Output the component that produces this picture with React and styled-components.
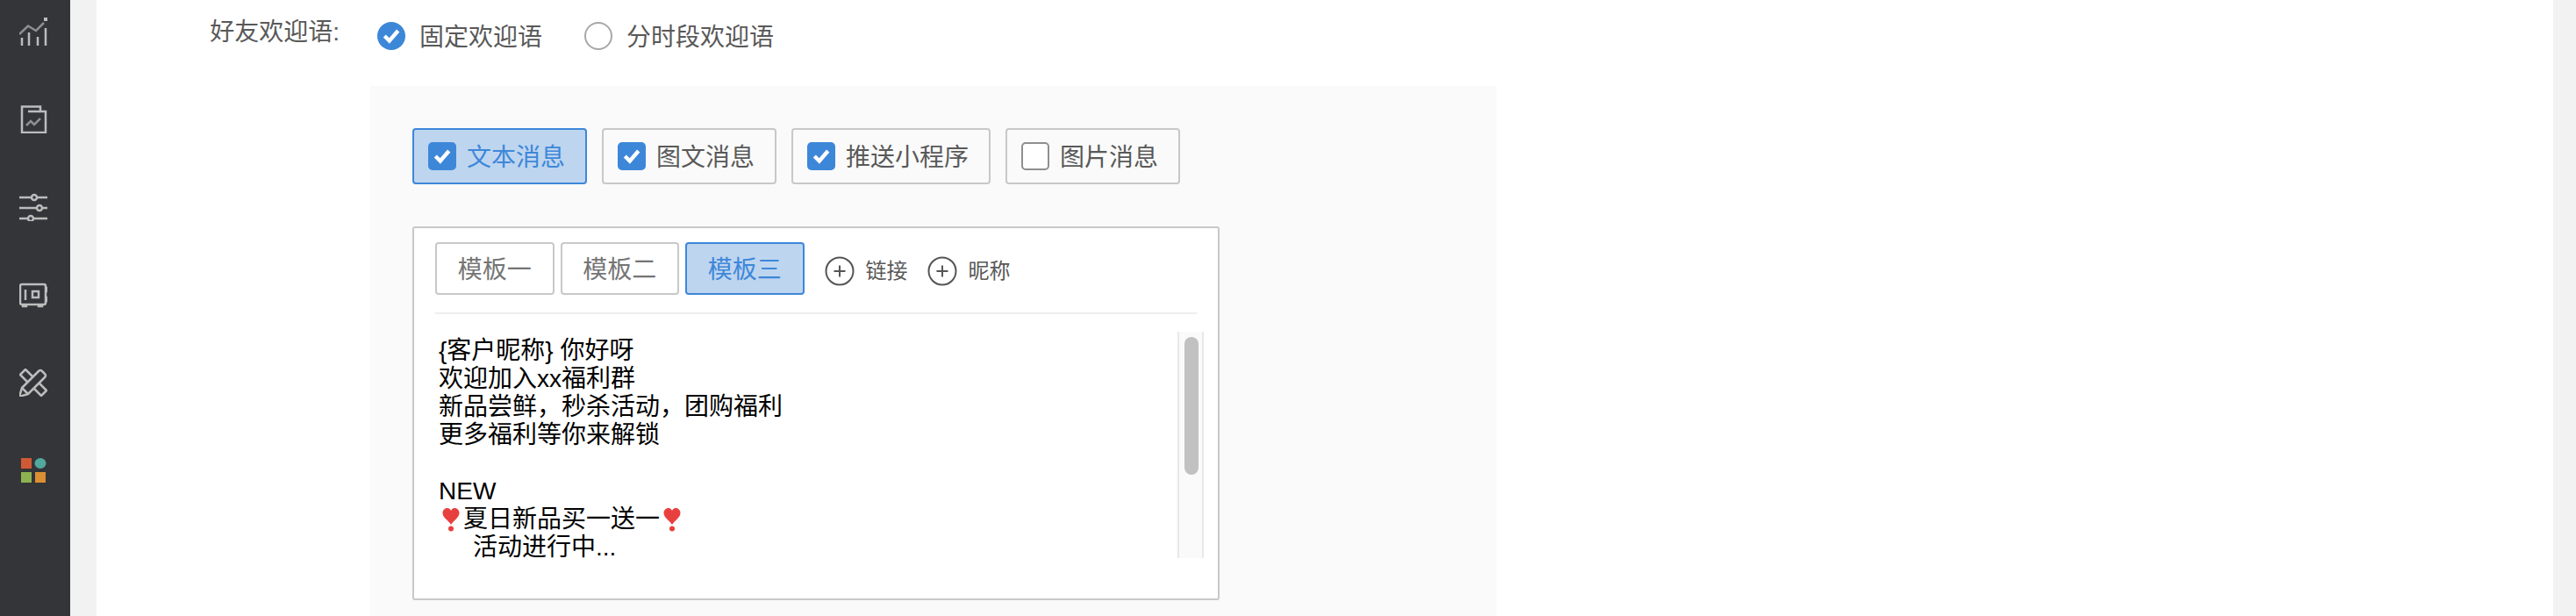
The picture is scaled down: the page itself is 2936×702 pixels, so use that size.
import React from 'react';
import styled, { createGlobalStyle } from 'styled-components';

const Global = createGlobalStyle`
  html, body { margin: 0; padding: 0; height: 100%; overflow: hidden; }
  body {
    background: #f2f2f2;
    font-family: "Liberation Sans", "Noto Sans CJK SC", sans-serif;
  }
`;

const Layout = styled.div`
  display: flex;
  width: 2936px;
  height: 702px;
  overflow: hidden;
`;

const Sidebar = styled.nav`
  width: 80px;
  flex: none;
  background: #333538;
  display: flex;
  flex-direction: column;
  align-items: center;
  padding: 20px 4px 0 0;
  box-sizing: border-box;
`;

const NavIcon = styled.div`
  width: 32px;
  height: 32px;
  margin-bottom: 68px;
  svg { display: block; }
`;

const Main = styled.main`
  flex: 1;
  padding: 0 26px 0 30px;
`;

const Card = styled.section`
  background: #fff;
  height: 702px;
  padding-top: 21px;
  box-sizing: border-box;
`;

const FormRow = styled.div`
  display: flex;
  height: 40px;
`;

const FormLabel = styled.label`
  width: 277px;
  text-align: right;
  font-size: 28px;
  line-height: 31px;
  color: #595959;
`;

const RadioGroup = styled.div`
  display: flex;
  gap: 48px;
  margin-left: 43px;
`;

const Radio = styled.div`
  display: flex;
  align-items: center;
  gap: 16px;
  font-size: 28px;
  color: #595959;
`;

const RadioText = styled.span`
  margin-top: -3px;
`;

const RadioMark = styled.span`
  width: 32px;
  height: 32px;
  border-radius: 50%;
  box-sizing: border-box;
  border: ${p => (p.$on ? 'none' : '2px solid #a8a8a8')};
  background: ${p => (p.$on ? '#3d87d9' : '#fff')};
  display: flex;
  align-items: center;
  justify-content: center;
`;

const Panel = styled.div`
  margin: 37px 0 0 312px;
  width: 1284px;
  height: 604px;
  background: #fafafa;
  padding: 48px;
  box-sizing: border-box;
`;

const TypeRow = styled.div`
  display: flex;
  gap: 17px;
`;

const TypeButton = styled.div`
  height: 64px;
  padding: 0 23px 0 16px;
  box-sizing: border-box;
  border: 2px solid ${p => (p.$active ? '#3d87d9' : '#c8c8c8')};
  border-radius: 4px;
  background: ${p => (p.$active ? '#bed5ef' : 'transparent')};
  color: ${p => (p.$active ? '#3d87d9' : '#595959')};
  display: flex;
  align-items: center;
  gap: 12px;
  font-size: 28px;
`;

const TypeLabel = styled.span`
  margin-top: -2px;
`;

const CheckMark = styled.span`
  width: 32px;
  height: 32px;
  border-radius: 5px;
  box-sizing: border-box;
  background: ${p => (p.$on ? '#3d87d9' : '#fff')};
  border: ${p => (p.$on ? 'none' : '2px solid #8f8f8f')};
  display: flex;
  align-items: center;
  justify-content: center;
`;

const Editor = styled.div`
  margin-top: 48px;
  width: 920px;
  height: 426px;
  background: #fff;
  border: 2px solid #c8c8c8;
  border-radius: 3px;
  box-sizing: border-box;
  padding: 16px 24px 0;
`;

const ToolBar = styled.div`
  display: flex;
  height: 82px;
  box-sizing: border-box;
  border-bottom: 2px solid #eeeeee;
`;

const TemplateButton = styled.div`
  width: 135.5px;
  height: 60px;
  margin-right: 7px;
  padding-bottom: 3px;
  box-sizing: border-box;
  border: 2px solid ${p => (p.$active ? '#3d87d9' : '#c8c8c8')};
  border-radius: 4px;
  background: ${p => (p.$active ? '#bed5ef' : '#fff')};
  color: ${p => (p.$active ? '#3d87d9' : '#757575')};
  display: flex;
  align-items: center;
  justify-content: center;
  font-size: 28px;
`;

const InsertButton = styled.div`
  display: flex;
  align-items: center;
  gap: 13px;
  height: 60px;
  margin-left: ${p => (p.$first ? '16px' : '22px')};
  font-size: 24px;
  color: #595959;
  svg { display: block; margin-top: 6px; }
`;

const MessageBox = styled.div`
  display: flex;
  margin: 20px -8px 0 0;
  height: 258px;
`;

const MessageText = styled.div`
  flex: 1;
  padding: 6px 0 0 4px;
  font-size: 28px;
  line-height: 32px;
  color: #000;
  white-space: pre;
`;

const ScrollTrack = styled.div`
  width: 30px;
  height: 258px;
  background: #fafafa;
  border-left: 2px solid #e8e8e8;
  border-right: 2px solid #e8e8e8;
  box-sizing: border-box;
  padding: 6px 4px 0 6px;
`;

const ScrollThumb = styled.div`
  width: 16px;
  height: 157px;
  background: #c1c1c1;
  border-radius: 8px;
`;

const Tick = () => (
  <svg width="22" height="22" viewBox="0 0 20 20" fill="none">
    <path d="M3 10 L8 15 L17 4.500" stroke="#fff" strokeWidth="4" />
  </svg>
);

const PlusCircle = () => (
  <svg width="34" height="34" viewBox="0 0 34 34" fill="none" stroke="#555" strokeWidth="2">
    <circle cx="17" cy="17" r="15.500" />
    <path d="M17 10.500v13M10.500 17h13" />
  </svg>
);

const HeartSvg = styled.svg`
  vertical-align: -6px;
`;

const HeartMark = () => (
  <HeartSvg width="28" height="28" viewBox="0 0 28 28">
    <path
      d="M14 19 C11 14 4.500 11 4.500 5.500 C4.500 2 7.500 0 10 0 C12 0 13.500 1.500 14 3 C14.500 1.500 16 0 18 0 C20.500 0 23.500 2 23.500 5.500 C23.500 11 17 14 14 19Z"
      fill="#e8403e"
    />
    <circle cx="14" cy="23.500" r="3" fill="#e8403e" />
  </HeartSvg>
);

const stroke = { fill: 'none', stroke: '#bcbcbc', strokeWidth: 2.500 };

const icons = [
  <svg key="chart" width="32" height="32" viewBox="0 0 32 32" {...stroke}>
    <path d="M0 19 L10 9.500 L19 15 L28 6" stroke="#8f8f8f" />
    <path d="M3 32V23M11 32V17M21 32V22M30 32V12" />
    <rect x="28" y="0" width="4" height="4" fill="#bcbcbc" stroke="none" />
  </svg>,
  <svg key="folder" width="32" height="32" viewBox="0 0 32 32" {...stroke}>
    <path d="M3 1.500H24V7H30V31H3Z" />
    <path d="M10 7H24" />
    <path d="M8 23L13 18L17 22L24 15" stroke="#8f8f8f" />
  </svg>,
  <svg key="sliders" width="32" height="32" viewBox="0 0 32 32" {...stroke}>
    <path d="M0 5H14M20 5H32M0 17H20M26 17H32M0 29H10M16 29H32" />
    <circle cx="17" cy="5" r="3" />
    <circle cx="23" cy="17" r="3" />
    <circle cx="13" cy="29" r="3" />
  </svg>,
  <svg key="safe" width="32" height="32" viewBox="0 0 32 32" {...stroke}>
    <rect x="1" y="4" width="29" height="23" rx="2" />
    <path d="M7 10V22M4 27v2h4v-2M22 27v2h4v-2M30 8h2v4h-2M30 19h2v4h-2" />
    <rect x="15" y="12" width="7" height="7" />
  </svg>,
  <svg key="tools" width="32" height="32" viewBox="0 0 32 32" {...stroke} strokeLinejoin="round">
    <path d="M0 32L3 22L22 3Q24 1 26 3L29 6Q31 8 29 10L10 29Z" />
    <path d="M3 22L10 29" />
    <path d="M9.500 15.500L1 7L7 1L15.500 9.500" />
    <path d="M16.500 22.500L25 31L31 25L22.500 16.500" />
  </svg>,
  <svg key="apps" width="32" height="32" viewBox="0 0 32 32">
    <rect x="2" y="2" width="12" height="12" fill="#d05a35" />
    <ellipse cx="24" cy="8" rx="6.500" ry="6" fill="#52a89c" />
    <rect x="2" y="18" width="12" height="12" fill="#8cb350" />
    <rect x="18" y="18" width="12" height="12" fill="#dc8f33" />
  </svg>,
];

const types = [
  { label: '文本消息', on: true, active: true },
  { label: '图文消息', on: true },
  { label: '推送小程序', on: true },
  { label: '图片消息', on: false },
];

export default function App() {
  return (
    <Layout>
      <Global />
      <Sidebar>
        {icons.map(icon => <NavIcon key={icon.key}>{icon}</NavIcon>)}
      </Sidebar>
      <Main>
        <Card>
          <FormRow>
            <FormLabel>好友欢迎语:</FormLabel>
            <RadioGroup>
              <Radio><RadioMark $on><Tick /></RadioMark><RadioText>固定欢迎语</RadioText></Radio>
              <Radio><RadioMark /><RadioText>分时段欢迎语</RadioText></Radio>
            </RadioGroup>
          </FormRow>
          <Panel>
            <TypeRow>
              {types.map(t => (
                <TypeButton key={t.label} $active={t.active}>
                  <CheckMark $on={t.on}>{t.on && <Tick />}</CheckMark>
                  <TypeLabel>{t.label}</TypeLabel>
                </TypeButton>
              ))}
            </TypeRow>
            <Editor>
              <ToolBar>
                <TemplateButton>模板一</TemplateButton>
                <TemplateButton>模板二</TemplateButton>
                <TemplateButton $active>模板三</TemplateButton>
                <InsertButton $first><PlusCircle />链接</InsertButton>
                <InsertButton><PlusCircle />昵称</InsertButton>
              </ToolBar>
              <MessageBox>
                <MessageText>
                  {'{客户昵称} 你好呀\n欢迎加入xx福利群\n新品尝鲜，秒杀活动，团购福利\n更多福利等你来解锁\n\nNEW\n'}
                  <HeartMark />夏日新品买一送一<HeartMark />
                  {'\n     活动进行中...'}
                </MessageText>
                <ScrollTrack><ScrollThumb /></ScrollTrack>
              </MessageBox>
            </Editor>
          </Panel>
        </Card>
      </Main>
    </Layout>
  );
}
